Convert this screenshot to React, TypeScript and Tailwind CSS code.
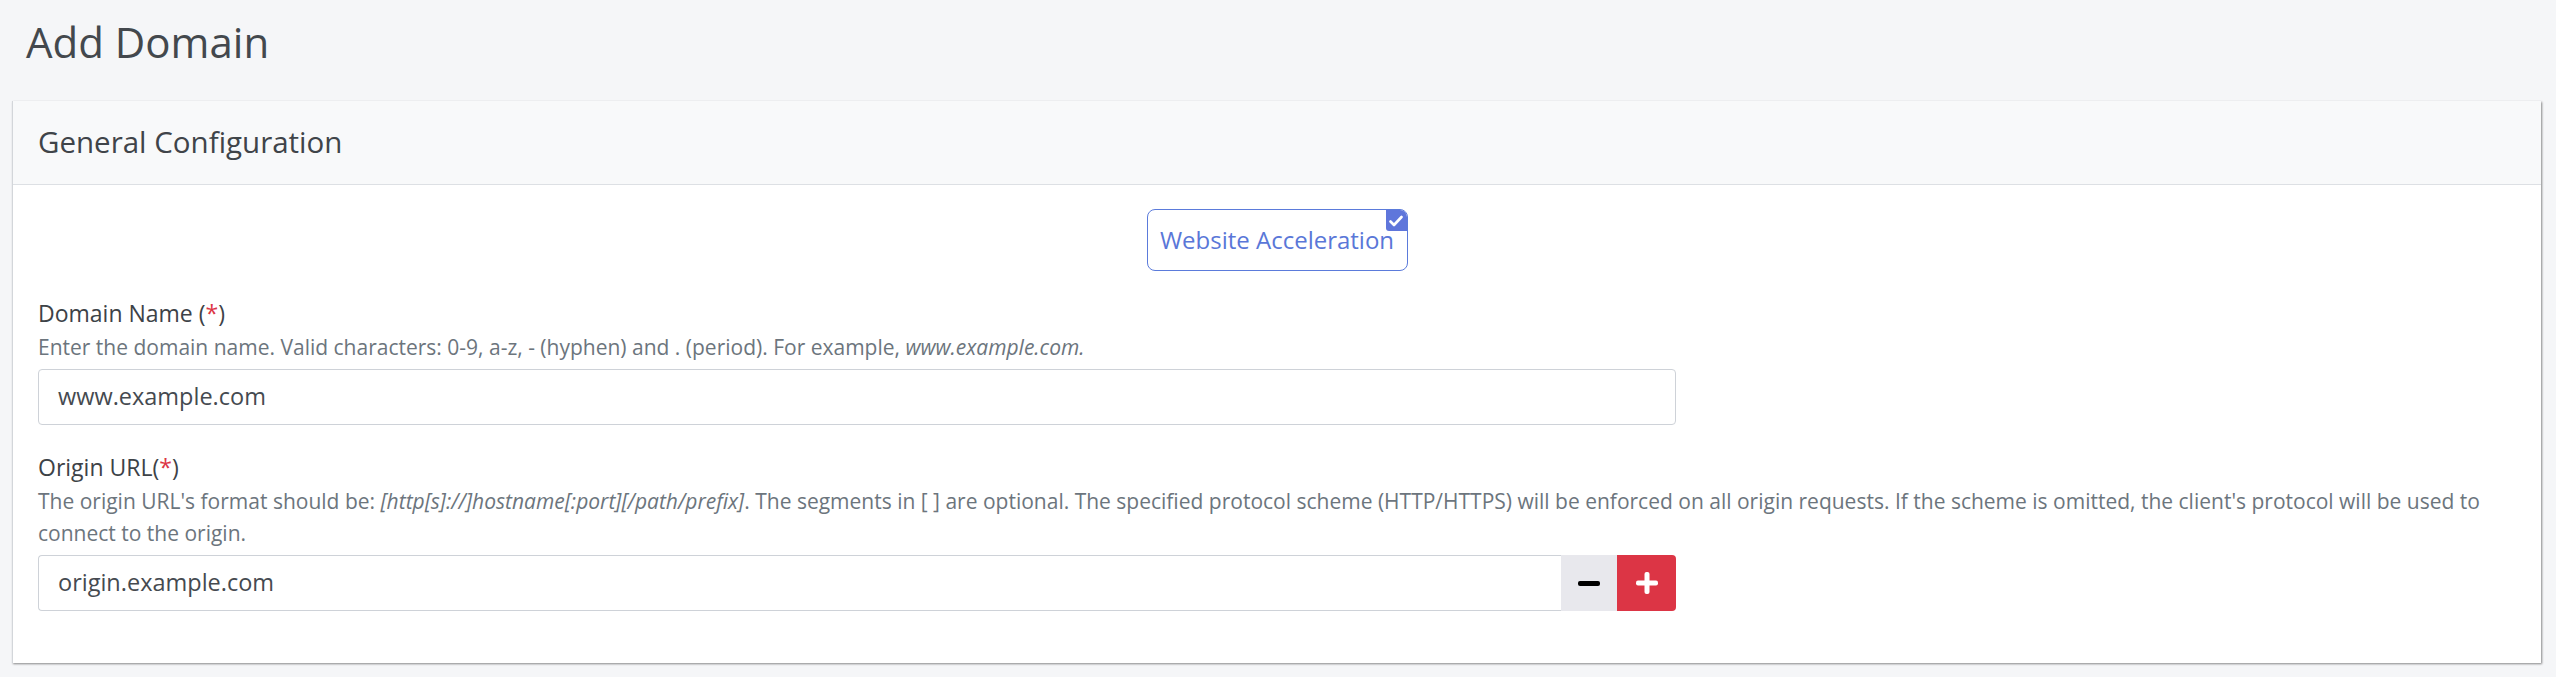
import React from "react";

export default function App() {
  return (
    <div className="min-h-[677px] w-[2556px] bg-[#f5f6f8] font-['Open_Sans',sans-serif] overflow-hidden">
      <div className="h-[101px] pl-[26px] pt-[10px]">
        <h1 className="text-[42px] leading-normal text-[#43484d] font-normal">Add Domain</h1>
      </div>
      <div className="ml-[12px] mr-[15px] bg-white border-l border-[#d3d6da] shadow-[1px_1px_2px_rgba(0,0,0,0.45)]">
        <div className="h-[84px] flex items-center px-[25px] bg-[#f8f9fa] border-b border-[#dde0e4]">
          <h2 className="text-[29.5px] text-[#3f4449] font-normal">General Configuration</h2>
        </div>
        <div className="px-[25px] pt-[24px] pb-[52px]">
          <div className="flex justify-center">
            <div className="relative h-[62px] w-[261px] flex items-center justify-center rounded-[8px] border border-[#5b7bdb] text-[24px] text-[#5a77d8]">
              Website Acceleration
              <div className="absolute top-0 right-0 h-[21px] w-[21px] bg-[#5f76db] rounded-tr-[7px] rounded-bl-[3px] flex items-center justify-center">
                <svg width="14" height="12" viewBox="0 0 14 12">
                  <path d="M1.5 6.5 L5 10 L12.5 2" fill="none" stroke="white" strokeWidth="2.6" strokeLinecap="round" strokeLinejoin="round" />
                </svg>
              </div>
            </div>
          </div>

          <div className="mt-[25px]">
            <div className="text-[23px] leading-[34px] text-[#3d4247]">
              Domain Name (<span className="text-[#dc3545]">*</span>)
            </div>
            <div className="mt-[1px] text-[21px] leading-[32px] text-[#6c757d]">
              Enter the domain name. Valid characters: 0-9, a-z, - (hyphen) and . (period). For example, <i>www.example.com.</i>
            </div>
            <div className="mt-[6px] w-[1638px] h-[56px] flex items-center px-[19px] border border-[#ced2d8] rounded-[4px] text-[23.5px] text-[#454a50]">
              www.example.com
            </div>
          </div>

          <div className="mt-[25px]">
            <div className="text-[23px] leading-[34px] text-[#3d4247]">
              Origin URL(<span className="text-[#dc3545]">*</span>)
            </div>
            <div className="mt-[1px] text-[21px] leading-[32px] text-[#6c757d]">
              The origin URL's format should be: <i>[http[s]://]hostname[:port][/path/prefix]</i>. The segments in [ ] are optional. The specified protocol scheme (HTTP/HTTPS) will be enforced on all origin requests. If the scheme is omitted, the client's protocol will be used to connect to the origin.
            </div>
            <div className="mt-[6px] w-[1638px] h-[56px] flex">
              <div className="flex-1 flex items-center px-[19px] border border-[#ced2d8] border-r-0 rounded-l-[4px] text-[23.5px] text-[#454a50]">
                origin.example.com
              </div>
              <div className="w-[56px] h-full bg-[#e8e8ed] flex items-center justify-center">
                <svg width="22" height="5" viewBox="0 0 22 5">
                  <rect x="0" y="0" width="22" height="5" rx="2" fill="#000" />
                </svg>
              </div>
              <div className="w-[59px] h-full bg-[#dc3545] rounded-r-[4px] flex items-center justify-center">
                <svg width="22" height="22" viewBox="0 0 22 22">
                  <rect x="0" y="8.5" width="22" height="5" rx="2" fill="#fff" />
                  <rect x="8.5" y="0" width="5" height="22" rx="2" fill="#fff" />
                </svg>
              </div>
            </div>
          </div>
        </div>
      </div>
    </div>
  );
}
